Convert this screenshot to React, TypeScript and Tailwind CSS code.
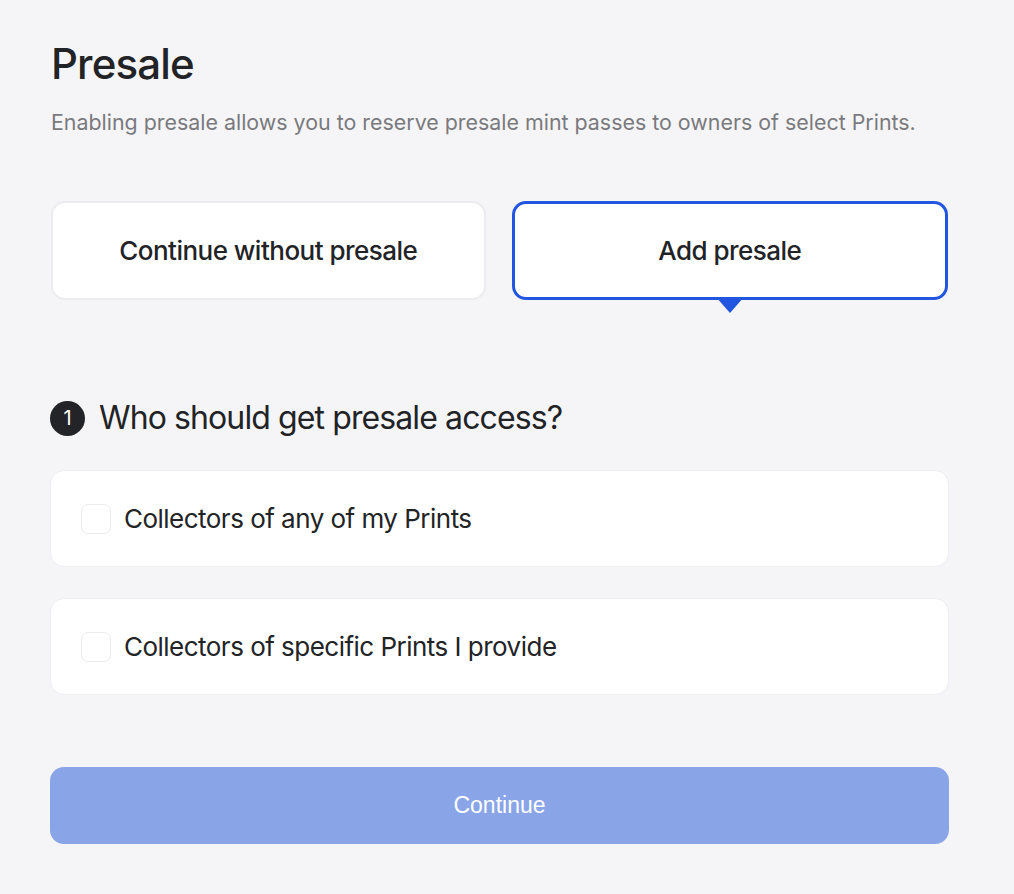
import React, { useState } from 'react';

const OPTIONS = ['Collectors of any of my Prints', 'Collectors of specific Prints I provide'];

export default function App() {
  const [mode, setMode] = useState<'none' | 'presale'>('presale');
  const [checked, setChecked] = useState<boolean[]>([false, false]);

  return (
    <div className="min-h-[894px] bg-[#f5f5f7] text-[#222326] font-['Inter',sans-serif]">
      <div className="w-[899px] ml-[50px] pt-[38px]">
        <h1 className="text-[42px] leading-[52px] font-medium tracking-[-0.02em] ml-[1px]">Presale</h1>
        <p className="mt-[19px] text-[21.4px] leading-[26px] text-[#7a7a7e] ml-[1px]">
          Enabling presale allows you to reserve presale mint passes to owners of select Prints.
        </p>

        {/* Presale mode toggle */}
        <div className="mt-[66px] flex gap-[26px] px-[1px]">
          <button
            onClick={() => setMode('none')}
            className={`relative flex-1 h-[99px] rounded-[14px] bg-white text-[26px] font-medium tracking-[-0.02em] ${
              mode === 'none' ? 'border-[3px] border-[#2356e0]' : 'border-2 border-[#ececee]'
            }`}
          >
            Continue without presale
            {mode === 'none' && (
              <span className="absolute left-1/2 -translate-x-1/2 top-full w-0 h-0 border-l-[14px] border-r-[14px] border-t-[16px] border-l-transparent border-r-transparent border-t-[#2356e0]" />
            )}
          </button>
          <button
            onClick={() => setMode('presale')}
            className={`relative flex-1 h-[99px] rounded-[14px] bg-white text-[26px] font-medium tracking-[-0.02em] ${
              mode === 'presale' ? 'border-[3px] border-[#2356e0]' : 'border-2 border-[#ececee]'
            }`}
          >
            Add presale
            {mode === 'presale' && (
              <span className="absolute left-1/2 -translate-x-1/2 top-full w-0 h-0 border-l-[14px] border-r-[14px] border-t-[16px] border-l-transparent border-r-transparent border-t-[#2356e0]" />
            )}
          </button>
        </div>

        {/* Step 1 */}
        <div className="mt-[98px] flex items-center gap-[14px]">
          <span className="w-[35px] h-[35px] rounded-full bg-[#232427] text-white text-[20px] flex items-center justify-center">
            1
          </span>
          <h2 className="text-[32px] leading-[40px] font-normal tracking-[-0.028em]">Who should get presale access?</h2>
        </div>

        <div className="mt-[32px] flex flex-col gap-[31px]">
          {OPTIONS.map((label, i) => (
            <label
              key={label}
              className="h-[97px] rounded-[14px] bg-white border border-[#eeeef0] flex items-center pl-[30px] gap-[13px] cursor-pointer"
            >
              <input
                type="checkbox"
                checked={checked[i]}
                onChange={() => setChecked(c => c.map((v, j) => (j === i ? !v : v)))}
                className="appearance-none w-[30px] h-[30px] rounded-[7px] border border-[#ebebed] bg-white checked:bg-[#2356e0] checked:border-[#2356e0]"
              />
              <span className="text-[26px] tracking-[-0.02em]">{label}</span>
            </label>
          ))}
        </div>

        <button className="mt-[72px] w-full h-[77px] rounded-[14px] bg-[#8aa4e8] text-white text-[23px] font-['Liberation_Sans',sans-serif]">
          Continue
        </button>
      </div>
    </div>
  );
}
